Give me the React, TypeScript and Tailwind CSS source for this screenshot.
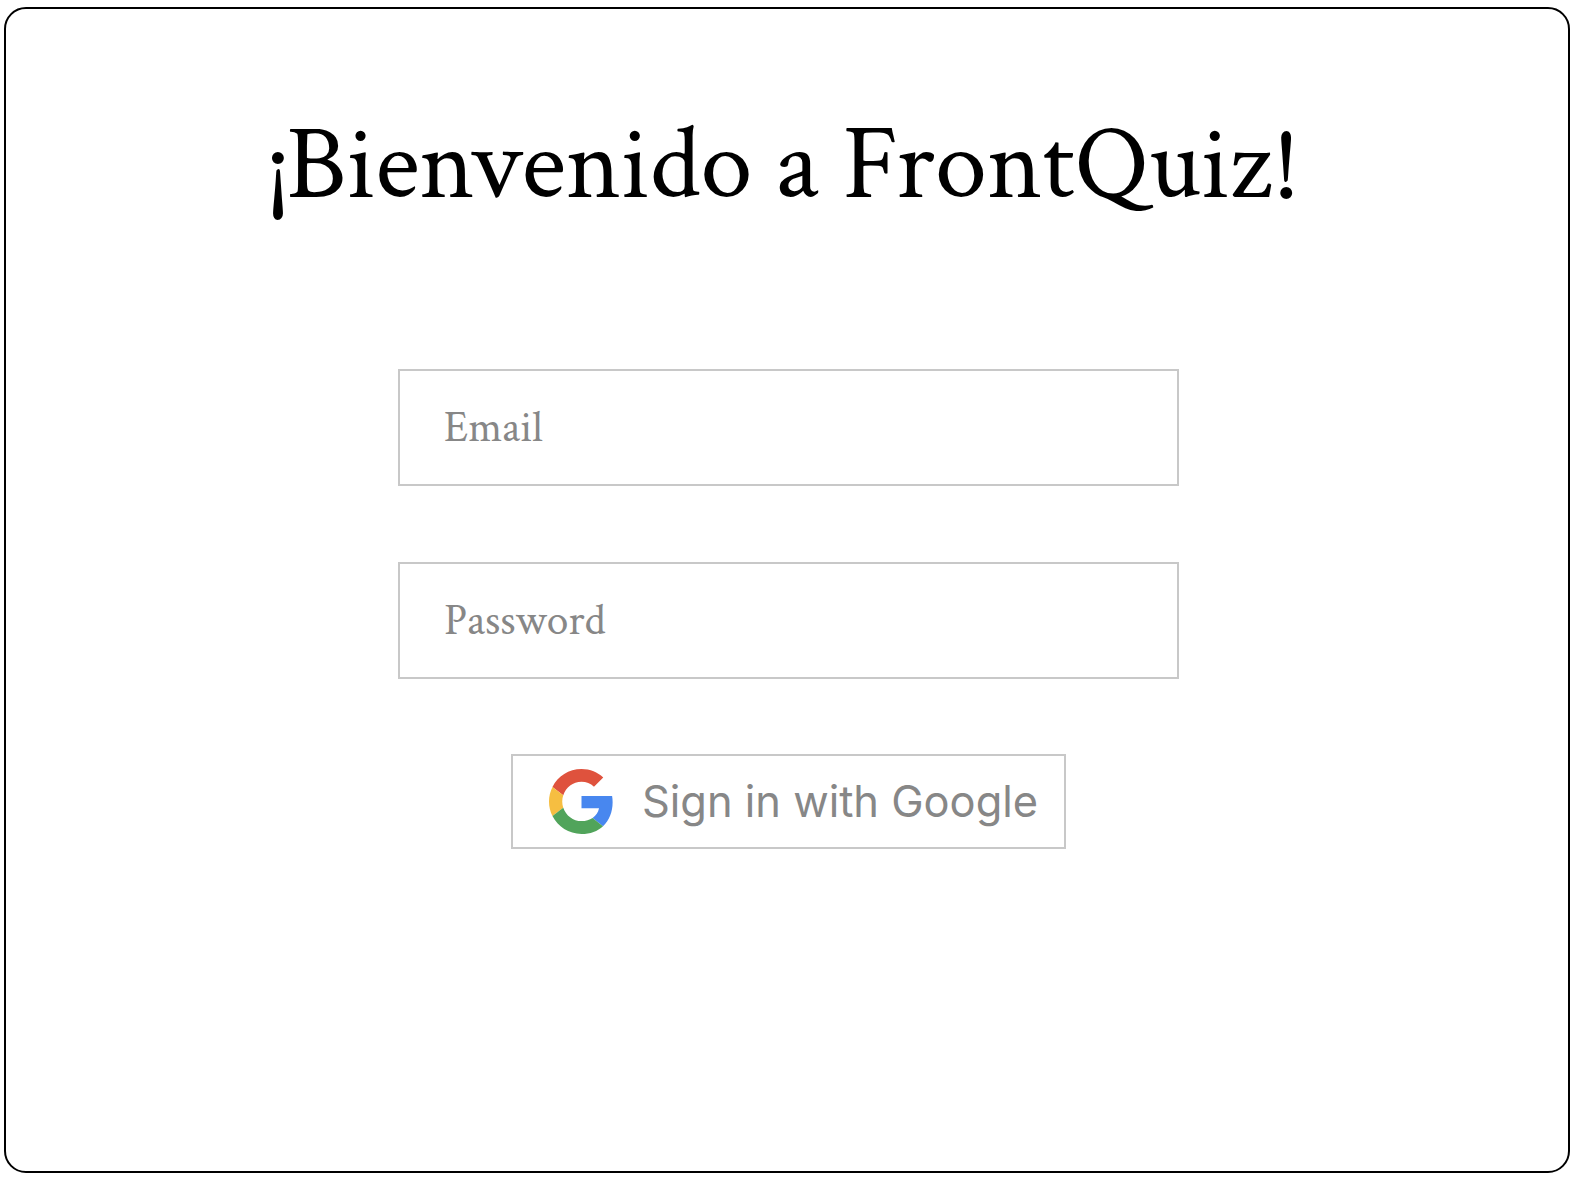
function GoogleLogo() {
  return (
    <svg viewBox="0 0 48 48" className="h-[65px] w-[65px] shrink-0" aria-hidden="true">
      <path fill="#DF523D" d="M24 9.5c3.54 0 6.71 1.22 9.21 3.6l6.85-6.85C35.9 2.38 30.47 0 24 0 14.62 0 6.51 5.38 2.56 13.22l7.98 6.19C12.43 13.72 17.74 9.5 24 9.5z" />
      <path fill="#4887EF" d="M46.98 24.55c0-1.57-.15-3.09-.38-4.55H24v9.02h12.94c-.58 2.96-2.26 5.48-4.78 7.18l7.73 6c4.51-4.18 7.09-10.36 7.09-17.65z" />
      <path fill="#F6BE41" d="M10.53 28.59c-.48-1.45-.76-2.99-.76-4.59s.27-3.14.76-4.59l-7.98-6.19C.92 16.46 0 20.12 0 24c0 3.88.92 7.54 2.56 10.78l7.97-6.19z" />
      <path fill="#51A45B" d="M24 48c6.48 0 11.93-2.13 15.89-5.81l-7.73-6c-2.15 1.45-4.92 2.3-8.16 2.3-6.26 0-11.57-4.22-13.47-9.91l-7.98 6.19C6.51 42.62 14.62 48 24 48z" />
    </svg>
  );
}

export default function App() {
  return (
    <div className="h-[1178px] w-[1576px] bg-white pt-[7px] pl-[4px] font-['Crimson_Text','Crimson_Pro','Liberation_Serif',serif]">
      <main className="flex h-[1166px] w-[1566px] flex-col items-center rounded-[22px] border-2 border-black">
        <h1 className="mt-[97px] h-[120px] w-[1035px] text-[104.4px] leading-[120px] whitespace-nowrap text-black">
          ¡Bienvenido a FrontQuiz!
        </h1>
        <form className="mt-[143px] ml-[3px] flex flex-col items-center text-[43.5px] text-[#878787]">
          <div className="flex h-[117px] w-[781px] items-center border-2 border-[#c8c8c8] pt-[2px] pl-[44px]">
            Email
          </div>
          <div className="mt-[76px] flex h-[117px] w-[781px] items-center border-2 border-[#c8c8c8] pt-[2px] pl-[44px]">
            Password
          </div>
          <button
            type="button"
            className="mt-[75px] flex h-[95px] w-[555px] items-center gap-[28px] border-2 border-[#c8c8c8] pl-[36px] font-['Inter',sans-serif] text-[43.4px] whitespace-nowrap"
          >
            <GoogleLogo />
            <span>Sign in with Google</span>
          </button>
        </form>
      </main>
    </div>
  );
}
